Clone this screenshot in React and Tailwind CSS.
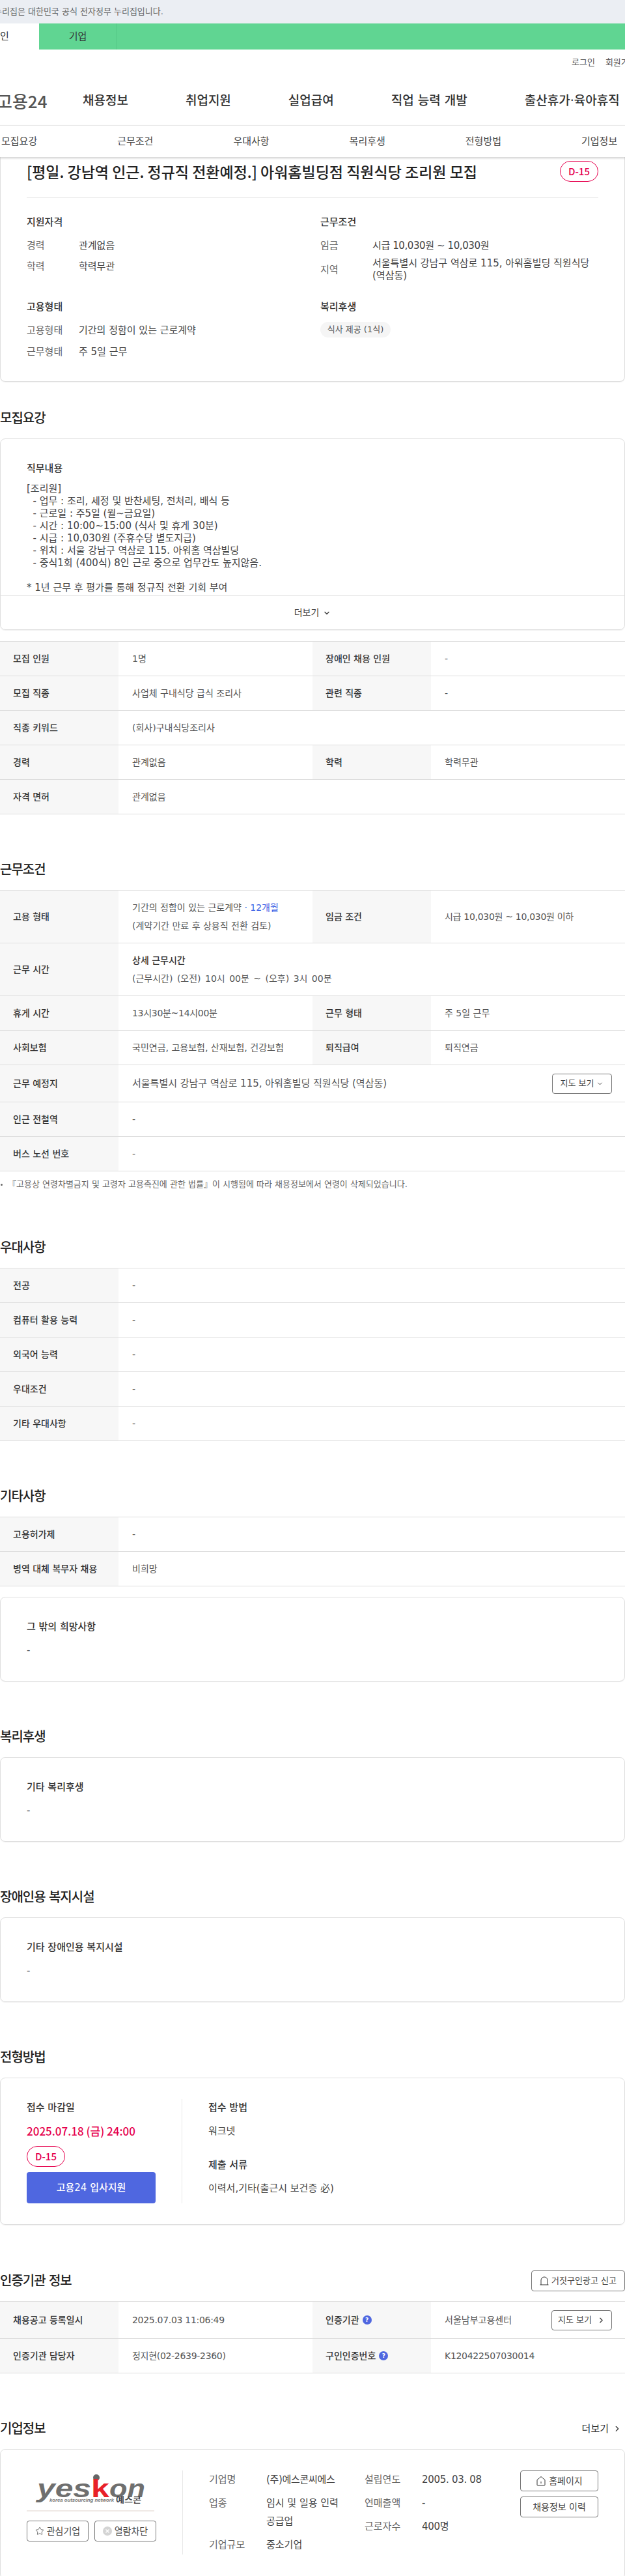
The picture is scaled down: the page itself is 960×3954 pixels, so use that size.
import React from 'react'
import { ChevronDown, ChevronRight, Star } from 'lucide-react'

const Heading = ({ children, className = 'mt-[70px]', right }) => (
  <div className={`flex h-[30px] items-center justify-between ${className}`}>
    <h2 className="text-[20px] font-medium tracking-[-1px] text-[#222]">{children}</h2>
    {right}
  </div>
)

const Row = ({ h = 'h-[53px]', label, value, label2, value2, children }) => (
  <div className={`flex border-b border-[#dedede] text-[14px] ${h}`}>
    <div className="flex w-[182px] shrink-0 items-center bg-[#f7f7f7] pl-5 font-medium text-[#333]">{label}</div>
    {label2 ? (
      <>
        <div className="flex w-[298px] shrink-0 items-center pl-[21px] text-[#555]">{value}</div>
        <div className="flex w-[182px] shrink-0 items-center gap-[5px] bg-[#f7f7f7] pl-5 font-medium text-[#333]">{label2}</div>
        <div className="flex flex-1 items-center justify-between pl-[21px] pr-[20px] text-[#555]">{value2}</div>
      </>
    ) : (
      <div className="flex flex-1 items-center justify-between pl-[21px] pr-[20px] text-[#555]">{value}{children}</div>
    )}
  </div>
)

const Num = ({ children }) => <span className="tracking-[-0.3px]">{children}</span>

const SimpleCard = ({ title }) => (
  <div className="mt-4 h-[130px] rounded-lg border border-[#dedede] px-10 pt-[34px] shadow-[0_1px_1px_rgba(0,0,0,0.06)]">
    <div className="h-[22px] text-[15px] font-medium leading-[22px] text-[#333]">{title}</div>
    <div className="mt-[14px] h-[22px] text-[15px] leading-[22px] text-[#555]">-</div>
  </div>
)

const Badge = ({ className = '' }) => (
  <div className={`flex h-8 w-[59px] shrink-0 items-center justify-center rounded-[16px] border border-[#e6004d] font-['Noto_Sans_CJK_KR',sans-serif] text-[15px] font-medium text-[#e6004d] ${className}`}>D-15</div>
)

const Help = () => (
  <span className="flex h-[14px] w-[14px] items-center justify-center rounded-full bg-[#4f67e0] text-[9px] font-bold leading-none text-white">?</span>
)

const OutlineButton = ({ className = '', children }) => (
  <div className={`flex items-center justify-center rounded border border-[#777] text-[14px] text-[#444] ${className}`}>{children}</div>
)

const YeskonLogo = () => (
  <svg width="199" height="61" viewBox="0 0 199 61">
    <circle cx="107" cy="11" r="5" fill="#666" />
    <g fontFamily="Liberation Sans, sans-serif" fontWeight="bold" fontSize="38">
      <text x="16" y="41" fontStyle="italic" fill="#6f6f6f" textLength="83" lengthAdjust="spacingAndGlyphs">yes</text>
      <text x="99" y="41" fill="#e8202a" textLength="28" lengthAdjust="spacingAndGlyphs">k</text>
      <text x="127" y="41" fontStyle="italic" fill="#6f6f6f" textLength="55" lengthAdjust="spacingAndGlyphs">on</text>
      <text x="35" y="48" fontSize="7" fontStyle="italic" fill="#777" textLength="99" lengthAdjust="spacingAndGlyphs">korea outsourcing network</text>
    </g>
    <text x="137" y="50" fontFamily="Noto Sans CJK KR, sans-serif" fontWeight="bold" fontSize="12" fill="#444" textLength="39" lengthAdjust="spacingAndGlyphs">예스콘</text>
  </svg>
)

const qualifyRow = 'flex h-[22px] items-center text-[15px]'

export default function App() {
  return (
    <div className="h-[3954px] w-[960px] overflow-hidden bg-white font-['DejaVu_Sans','Noto_Sans_CJK_KR',sans-serif] text-[#444]">
      {/* 누리집 안내 */}
      <div className="flex h-9 items-center whitespace-nowrap bg-[#ebeef3] text-[13px] text-[#666]">
        <span className="-ml-[9px]">누리집은 대한민국 공식 전자정부 누리집입니다.</span>
      </div>

      {/* 개인 / 기업 */}
      <div className="flex h-10 bg-[#60d592] text-[15px]">
        <div className="-ml-[60px] flex w-[120px] items-center justify-center bg-white text-[#333]">개인</div>
        <div className="flex w-[120px] items-center justify-center border-r border-[#52c585] text-[#333]">기업</div>
      </div>

      {/* 헤더 */}
      <div className="flex h-10 items-center gap-4 whitespace-nowrap pl-[878px] text-[13px] text-[#555]">
        <span>로그인</span>
        <span>회원가입</span>
      </div>
      <div className="flex h-[76px] items-center whitespace-nowrap">
        <div className="-ml-[5px] w-[132px] shrink-0 font-['Noto_Sans_CJK_KR',sans-serif] text-[26px] font-medium text-[#555]">고용24</div>
        <div className="flex gap-[88px] text-[19px] font-medium text-[#333]">
          <span>채용정보</span>
          <span>취업지원</span>
          <span>실업급여</span>
          <span>직업 능력 개발</span>
          <span>출산휴가·육아휴직</span>
        </div>
      </div>

      {/* 탭 */}
      <div className="relative z-10 flex h-[49px] items-center gap-[123px] border-t border-[#e8e8e8] bg-white pl-[2px] text-[15px] text-[#444] shadow-[0_2px_3px_rgba(0,0,0,0.18)]">
        <span>모집요강</span>
        <span>근무조건</span>
        <span>우대사항</span>
        <span>복리후생</span>
        <span>전형방법</span>
        <span>기업정보</span>
      </div>

      {/* 요약 카드 */}
      <div className="h-[345px] rounded-b-lg border border-t-0 border-[#dedede] px-10 pt-[6px] shadow-[0_1px_1px_rgba(0,0,0,0.06)]">
        <div className="flex h-8 items-center justify-between">
          <h1 className="font-['Noto_Sans_CJK_KR',sans-serif] text-[23px] font-medium text-[#222]">[평일. 강남역 인근. 정규직 전환예정.] 아워홈빌딩점 직원식당 조리원 모집</h1>
          <Badge />
        </div>
        <div className="mt-6 border-t border-[#e8e8e8]" />
        <div className="mt-[26px] grid grid-cols-[451px_1fr]">
          <div className="h-[130px]">
            <div className="h-[22px] text-[15px] font-medium leading-[22px] text-[#333]">지원자격</div>
            <div className={`mt-[14px] ${qualifyRow}`}><span className="w-20 text-[#666]">경력</span><span>관계없음</span></div>
            <div className={`mt-[10px] ${qualifyRow}`}><span className="w-20 text-[#666]">학력</span><span>학력무관</span></div>
          </div>
          <div className="h-[130px]">
            <div className="h-[22px] text-[15px] font-medium leading-[22px] text-[#333]">근무조건</div>
            <div className={`mt-[14px] ${qualifyRow}`}><span className="w-20 text-[#666]">임금</span><span className="tracking-[-0.4px]">시급 10,030원 ~ 10,030원</span></div>
            <div className="mt-[7px] flex items-center text-[15px] leading-[19px]">
              <span className="w-20 shrink-0 text-[#666]">지역</span>
              <span>서울특별시 강남구 역삼로 115, 아워홈빌딩 직원식당<br />(역삼동)</span>
            </div>
          </div>
          <div>
            <div className="h-[22px] text-[15px] font-medium leading-[22px] text-[#333]">고용형태</div>
            <div className={`mt-[14px] ${qualifyRow}`}><span className="w-20 text-[#666]">고용형태</span><span>기간의 정함이 있는 근로계약</span></div>
            <div className={`mt-[11px] ${qualifyRow}`}><span className="w-20 text-[#666]">근무형태</span><span>주 5일 근무</span></div>
          </div>
          <div>
            <div className="h-[22px] text-[15px] font-medium leading-[22px] text-[#333]">복리후생</div>
            <div className="mt-3 flex h-6 w-[108px] items-center justify-center rounded-xl bg-[#f5f5f5] text-[13px] text-[#555]">식사 제공 (1식)</div>
          </div>
        </div>
      </div>

      {/* 모집요강 */}
      <Heading className="mt-[41px]">모집요강</Heading>
      <div className="mt-4 h-[294px] rounded-lg border border-[#dedede] shadow-[0_1px_1px_rgba(0,0,0,0.06)]">
        <div className="h-[240px] overflow-hidden px-10 pt-[34px]">
          <div className="h-[22px] text-[15px] font-medium leading-[22px] text-[#333]">직무내용</div>
          <div className="mt-[11px] whitespace-pre text-[15px] leading-[19px] text-[#444]">{`[조리원]
  - 업무 : 조리, 세정 및 반찬세팅, 전처리, 배식 등
  - 근로일 : 주5일 (월~금요일)
  - 시간 : 10:00~15:00 (식사 및 휴게 30분)
  - 시급 : 10,030원 (주휴수당 별도지급)
  - 위치 : 서울 강남구 역삼로 115. 아워홈 역삼빌딩
  - 중식1회 (400식) 8인 근로 중으로 업무간도 높지않음.

* 1년 근무 후 평가를 통해 정규직 전환 기회 부여`}</div>
        </div>
        <div className="flex h-[52px] items-center justify-center gap-[6px] border-t border-[#dedede] text-[14px] text-[#444]">
          더보기 <ChevronDown size={12} strokeWidth={3} />
        </div>
      </div>

      <div className="mt-[17px] border-t border-[#dedede]">
        <Row label="모집 인원" value="1명" label2="장애인 채용 인원" value2="-" />
        <Row label="모집 직종" value="사업체 구내식당 급식 조리사" label2="관련 직종" value2="-" />
        <Row label="직종 키워드" value="(회사)구내식당조리사" />
        <Row label="경력" value="관계없음" label2="학력" value2="학력무관" />
        <Row label="자격 면허" value="관계없음" />
      </div>

      {/* 근무조건 */}
      <Heading>근무조건</Heading>
      <div className="mt-4 border-t border-[#dedede]">
        <Row
          h="h-[81px]"
          label="고용 형태"
          value={<div className="leading-[28px]">기간의 정함이 있는 근로계약 <span className="text-[#3a5fe5]">· 12개월</span><br />(계약기간 만료 후 상용직 전환 검토)</div>}
          label2="임금 조건"
          value2={<Num>시급 10,030원 ~ 10,030원 이하</Num>}
        />
        <Row
          h="h-[81px]"
          label="근무 시간"
          value={<div className="leading-[28px]"><span className="font-medium text-[#333]">상세 근무시간</span><br /><span className="[word-spacing:2px]">(근무시간) (오전) 10시 00분 ~ (오후) 3시 00분</span></div>}
        />
        <Row label="휴게 시간" value={<Num>13시30분~14시00분</Num>} label2="근무 형태" value2="주 5일 근무" />
        <Row label="사회보험" value="국민연금, 고용보험, 산재보험, 건강보험" label2="퇴직급여" value2="퇴직연금" />
        <Row h="h-[57px]" label="근무 예정지" value={<span className="text-[15px]">서울특별시 강남구 역삼로 115, 아워홈빌딩 직원식당 (역삼동)</span>}>
          <OutlineButton className="h-[31px] w-[92px] gap-1 !text-[13px]">지도 보기 <ChevronDown size={11} /></OutlineButton>
        </Row>
        <Row label="인근 전철역" value="-" />
        <Row label="버스 노선 번호" value="-" />
      </div>
      <div className="mt-[10px] flex h-5 items-center text-[13px] text-[#666]">
        <span className="ml-[1px] mr-[8px] h-[3px] w-[3px] rounded-full bg-[#666]" />
        『고용상 연령차별금지 및 고령자 고용촉진에 관한 법률』이 시행됨에 따라 채용정보에서 연령이 삭제되었습니다.
      </div>

      {/* 우대사항 */}
      <Heading className="mt-[72px]">우대사항</Heading>
      <div className="mt-4 border-t border-[#dedede]">
        <Row label="전공" value="-" />
        <Row label="컴퓨터 활용 능력" value="-" />
        <Row label="외국어 능력" value="-" />
        <Row label="우대조건" value="-" />
        <Row label="기타 우대사항" value="-" />
      </div>

      {/* 기타사항 */}
      <Heading>기타사항</Heading>
      <div className="mt-4 border-t border-[#dedede]">
        <Row label="고용허가제" value="-" />
        <Row label="병역 대체 복무자 채용" value="비희망" />
      </div>
      <div className="mt-4">
        <SimpleCard title="그 밖의 희망사항" />
      </div>

      {/* 복리후생 */}
      <Heading>복리후생</Heading>
      <SimpleCard title="기타 복리후생" />

      <Heading>장애인용 복지시설</Heading>
      <SimpleCard title="기타 장애인용 복지시설" />

      {/* 전형방법 */}
      <Heading>전형방법</Heading>
      <div className="mt-4 flex h-[226px] rounded-lg border border-[#dedede] py-8 pl-10 shadow-[0_1px_1px_rgba(0,0,0,0.06)]">
        <div className="w-[239px] shrink-0 border-r border-[#e8e8e8] pr-10 pt-[2px]">
          <div className="h-[22px] text-[15px] font-medium leading-[22px] text-[#333]">접수 마감일</div>
          <div className="mt-[14px] h-[22px] whitespace-nowrap font-['Noto_Sans_CJK_KR',sans-serif] text-[17px] font-medium leading-[22px] text-[#e6004d]">2025.07.18 (금) 24:00</div>
          <Badge className="mt-3" />
          <div className="mt-2 flex h-12 items-center justify-center rounded bg-[#4f67e0] text-[15px] font-medium text-white">고용24 입사지원</div>
        </div>
        <div className="pl-10 pt-[2px]">
          <div className="h-[22px] text-[15px] font-medium leading-[22px] text-[#333]">접수 방법</div>
          <div className="mt-[14px] h-[22px] text-[15px] leading-[22px]">워크넷</div>
          <div className="mt-[30px] h-[22px] text-[15px] font-medium leading-[22px] text-[#333]">제출 서류</div>
          <div className="mt-[14px] h-[22px] text-[15px] leading-[22px]">이력서,기타(출근시 보건증 必)</div>
        </div>
      </div>

      {/* 인증기관 정보 */}
      <Heading
        className="mt-[71px]"
        right={
          <OutlineButton className="h-8 w-[144px] gap-1 !text-[13px]">
            <svg width="14" height="14" viewBox="0 0 14 14" fill="none" stroke="#333" strokeWidth="1">
              <path d="M0.5 13h13M2 13V6a5 5 0 0 1 10 0v7" />
            </svg>
            거짓구인광고 신고
          </OutlineButton>
        }
      >
        인증기관 정보
      </Heading>
      <div className="mt-4 border-t border-[#dedede]">
        <Row
          h="h-[57px]"
          label="채용공고 등록일시"
          value={<Num>2025.07.03 11:06:49</Num>}
          label2={<>인증기관 <Help /></>}
          value2={
            <>
              서울남부고용센터
              <OutlineButton className="h-[31px] w-[93px] gap-2 !text-[13px]">지도 보기 <ChevronRight size={13} strokeWidth={2.5} /></OutlineButton>
            </>
          }
        />
        <Row label="인증기관 담당자" value={<Num>정지현(02-2639-2360)</Num>} label2={<>구인인증번호 <Help /></>} value2={<Num>K120422507030014</Num>} />
      </div>

      {/* 기업정보 */}
      <Heading
        right={
          <div className="flex items-center gap-[6px] pr-[5px] text-[15px] text-[#333]">
            더보기 <ChevronRight size={14} />
          </div>
        }
      >
        기업정보
      </Heading>
      <div className="mt-4 flex h-[200px] rounded-lg border border-[#dedede] pl-10 pt-[32px]">
        <div className="h-[129px] w-[240px] shrink-0 border-r border-[#e8e8e8] pr-10">
          <YeskonLogo />
          <div className="h-[2px] w-[196px] bg-[#efe9e5]" />
          <div className="mt-[14px] flex gap-[9px]">
            <OutlineButton className="h-8 w-[95px] gap-1">
              <Star size={14} strokeWidth={1.3} /> 관심기업
            </OutlineButton>
            <OutlineButton className="h-8 w-[95px] gap-1">
              <svg width="14" height="14" viewBox="0 0 14 14">
                <circle cx="7" cy="7" r="7" fill="#d4d4d4" />
                <path d="M4.5 4.5l5 5M9.5 4.5l-5 5" stroke="#fff" strokeWidth="1.3" />
              </svg>
              열람차단
            </OutlineButton>
          </div>
        </div>
        <div className="grid w-[279px] shrink-0 grid-cols-[88px_1fr] content-start gap-y-2 pl-10 text-[15px] leading-[28px]">
          <span className="text-[#666]">기업명</span><span className="tracking-[-0.3px]">(주)예스콘씨에스</span>
          <span className="text-[#666]">업종</span><span>임시 및 일용 인력<br />공급업</span>
          <span className="text-[#666]">기업규모</span><span>중소기업</span>
        </div>
        <div className="grid w-[239px] shrink-0 grid-cols-[88px_1fr] content-start gap-y-2 text-[15px] leading-[28px]">
          <span className="text-[#666]">설립연도</span><span className="tracking-[-0.3px]">2005. 03. 08</span>
          <span className="text-[#666]">연매출액</span><span>-</span>
          <span className="text-[#666]">근로자수</span><span className="tracking-[-0.3px]">400명</span>
        </div>
        <div className="flex w-[120px] shrink-0 flex-col gap-2">
          <OutlineButton className="h-8 gap-1">
            <svg width="16" height="16" viewBox="0 0 16 16" fill="none" stroke="#333" strokeWidth="1">
              <path d="M2 6.5L8 1.5l6 5V14a1 1 0 0 1-1 1H3a1 1 0 0 1-1-1z" />
              <path d="M8 9v3" />
            </svg>
            홈페이지
          </OutlineButton>
          <OutlineButton className="h-8">채용정보 이력</OutlineButton>
        </div>
      </div>
    </div>
  )
}
